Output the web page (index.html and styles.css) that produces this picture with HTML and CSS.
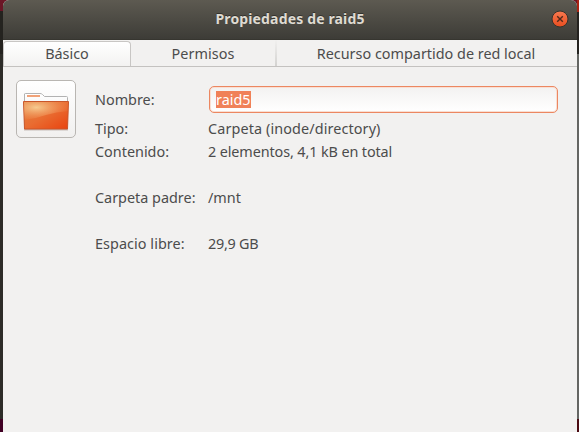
FILE: index.html
```html
<!DOCTYPE html>
<html lang="es">
<head>
<meta charset="utf-8">
<title>Propiedades de raid5</title>
<link rel="stylesheet" href="styles.css">
</head>
<body>
<div class="edge left"></div>
<div class="window">
  <header class="titlebar">
    <h1>Propiedades de raid5</h1>
    <button class="close" aria-label="Cerrar"><svg width="18" height="18" viewBox="0 0 18 18">
      <defs><linearGradient id="closeFill" x2="0" y2="1"><stop stop-color="#f87950"/><stop offset="1" stop-color="#e94e20"/></linearGradient></defs>
      <circle cx="9" cy="9" r="8" fill="url(#closeFill)" stroke="#35332d"/>
      <path d="M6.200 6.200l5.600 5.600M11.800 6.200l-5.600 5.600" stroke="#51291b" stroke-width="1.400"/>
    </svg></button>
  </header>
  <nav class="tabs">
    <div class="tab active"><span>Básico</span></div>
    <div class="tab second"><span class="t-perm">Permisos</span></div>
    <div class="tab last"><span class="t-share">Recurso compartido de red local</span></div>
  </nav>
  <main class="page">
    <div class="icon-button">
      <svg width="48" height="44" viewBox="0 0 48 44">
        <defs>
          <linearGradient id="front" x2="1" y2="1"><stop stop-color="#e2813f"/><stop offset=".5" stop-color="#e96c31"/><stop offset="1" stop-color="#e9430f"/></linearGradient>
          <radialGradient id="glow" cx=".28" cy=".3" r=".75"><stop stop-color="#f6cb90"/><stop offset="1" stop-color="#f3955a" stop-opacity=".1"/></radialGradient>
          <linearGradient id="paper" x2="0" y2="1"><stop stop-color="#fff"/><stop offset="1" stop-color="#e8e8e8"/></linearGradient>
        </defs>
        <path d="M2 42h44v1.500H2z" fill="#9b8c86" opacity=".5"/>
        <path d="M2.500 38V7Q2.500 6.500 3.500 6.500H18Q19.500 6.500 20.500 7.500L22.500 9.500H44.500Q45.500 9.500 45.500 10.500V38Z" fill="url(#paper)" stroke="#b2b2b2"/>
        <path d="M5 8h13v2H5z" fill="#f1a278"/>
        <path d="M1.500 14.500H46.500L45.500 42H2.500Z" fill="url(#front)" stroke="#c9562a"/>
        <path d="M2 15H46L45.800 24Q34 25 24 28Q13 32 2.500 33Z" fill="url(#glow)"/>
      </svg>
    </div>
    <dl class="fields">
      <dt class="name"><span class="l-name">Nombre:</span></dt>
      <dd class="name"><div class="entry"><span class="selection">raid5</span></div></dd>
      <dt>Tipo:</dt><dd><span class="v-type">Carpeta (inode/directory)</span></dd>
      <dt>Contenido:</dt><dd><span class="v-content">2 elementos, 4,1 kB en total</span></dd>
      <dt class="gap">Carpeta padre:</dt><dd class="gap">/mnt</dd>
      <dt class="gap"><span class="l-free">Espacio libre:</span></dt><dd class="gap"><span class="v-free">29,9 GB</span></dd>
    </dl>
  </main>
</div>
<div class="edge right"></div>
</body>
</html>
```
FILE: styles.css
```css
* { box-sizing: border-box; }
body {
  margin: 0;
  width: 579px;
  height: 432px;
  overflow: hidden;
  display: flex;
  background: linear-gradient(#6b1626 0 11px, #2b2925 11px);
  font: 14.4px/23px "Noto Sans", sans-serif;
  color: #4c4c4c;
  white-space: nowrap;
}
.edge.left { width: 3px; background: linear-gradient(#6b1626 0 11px, #24231f 11px 54px, #2d2c28 54px 419px, #400024 419px); }
.edge.right { width: 2px; background: linear-gradient(#a92313 0 12px, #24221f 12px 54px, #656663 54px 419px, #4b0b12 419px); }
.window { width: 574px; height: 432px; background: #f2f1f0; border-radius: 6px 6px 0 0; overflow: hidden; }
.titlebar {
  height: 40px;
  display: grid;
  grid-template-columns: 1fr auto 1fr;
  align-items: center;
  padding: 0 8px 2px;
  background: linear-gradient(#5d5a51, #3d3c37);
  border-bottom: 1px solid #373630;
}
h1 { grid-column: 2; margin: 0; font-size: 14px; font-weight: 700; letter-spacing: .15px; color: #dfdbd2; text-shadow: 0 -1px #33322d; }
.close { justify-self: end; width: 18px; height: 18px; padding: 0; border: 0; background: none; }
.close svg { display: block; }
.tabs { height: 27px; display: grid; grid-template-columns: 128px 146px 1fr; border-bottom: 1px solid #c4c2c0; }
.tab { display: flex; align-items: center; justify-content: center; padding-top: 1px; }
.active { border: 1px solid #c8c6c4; border-bottom: 0; border-radius: 4px 4px 0 0; background: linear-gradient(#fff, #f3f2f1); margin-top: 1px; padding: 0 0 1px; }
.second { border-right: 2px solid; border-image: linear-gradient(#f2f1f0, #d2d1cf) 1; border-image-width: 0 2px 0 0; }
.t-perm { letter-spacing: .08px; }
.last { padding-right: 2px; }
.page { display: flex; padding: 13px 19px 0 13px; }
.icon-button {
  width: 60px;
  height: 58px;
  border: 1px solid #b9b6b2;
  border-radius: 5px;
  background: linear-gradient(#fff, #f1f0ef);
  display: flex;
  align-items: center;
  justify-content: center;
}
.fields { margin: 6px 0 0 19px; display: grid; grid-template-columns: 113px 350px; align-content: start; }
dt, dd { margin: 0; height: 23px; }
.name { height: 31px; line-height: 28px; }
.gap { margin-top: 23px; }
.v-type { letter-spacing: .11px; }
.v-content { letter-spacing: -.11px; }
.v-free { letter-spacing: -.25px; }
.l-free { letter-spacing: .06px; }
.entry {
  height: 27px;
  margin-left: 1px;
  display: flex;
  align-items: center;
  padding-left: 6px;
  border: 1px solid #ec8761;
  border-radius: 5px;
  background: linear-gradient(#f3f2f1, #fff);
  box-shadow: inset 0 0 0 1px #f9dfd3;
}
.selection { height: 17px; line-height: 17px; background: #f08158; color: #fff; }
```
